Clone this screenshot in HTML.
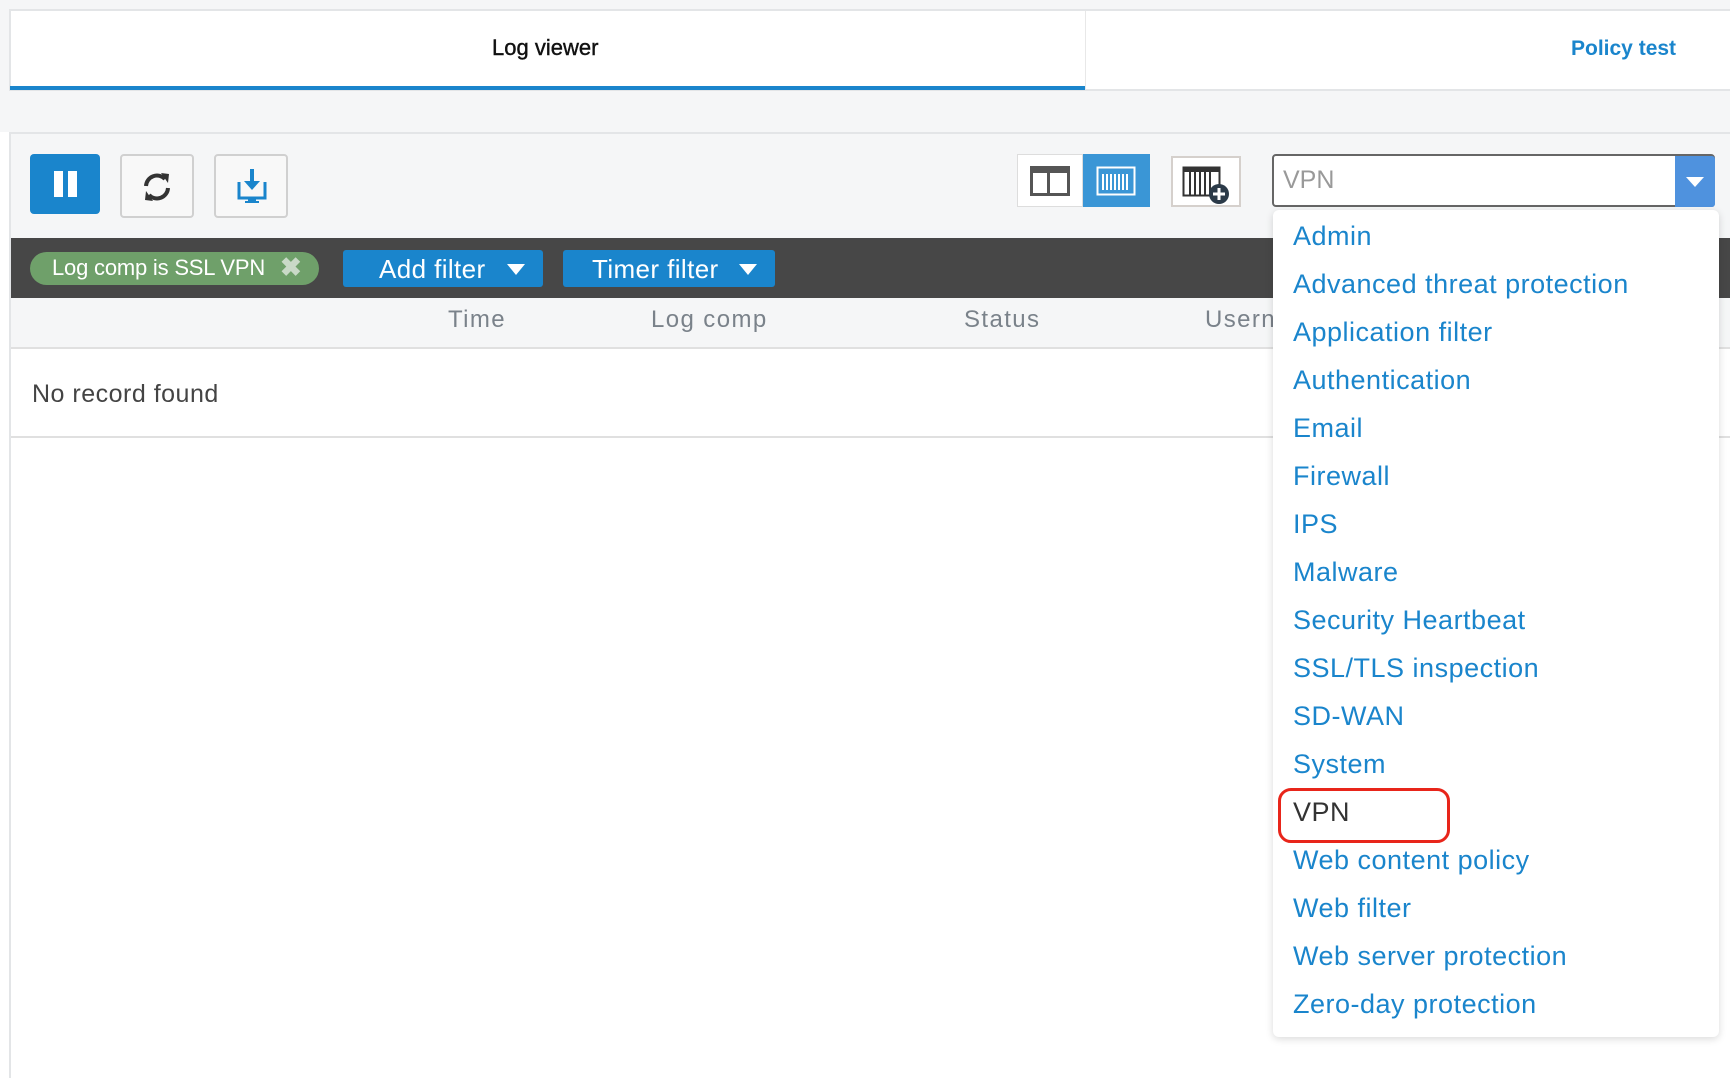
<!DOCTYPE html>
<html><head><meta charset="utf-8"><style>
*{margin:0;padding:0;box-sizing:border-box}
body{width:1730px;height:1078px;background:#fff;font-family:"Liberation Sans",sans-serif;position:relative;overflow:hidden}
.a{position:absolute}
.t{white-space:nowrap}
.dd div{position:absolute;left:20px;font-size:27px;color:#1a85cc;letter-spacing:0.5px;white-space:nowrap}
</style></head><body>
<div class="a" style="left:0;top:0;width:1730px;height:132px;background:#f5f6f7"></div>
<div class="a" style="left:9px;top:9px;width:1721px;height:82px;background:#fff;border-top:2px solid #e3e5e7;border-left:2px solid #e3e5e7;border-bottom:2px solid #e3e5e7"></div>
<div class="a" style="left:1085px;top:11px;width:1px;height:78px;background:#e8e8e8"></div>
<div class="a" style="left:10px;top:86px;width:1075px;height:4px;background:#1a85cc"></div>
<div class="a t" style="left:492px;top:35px;font-size:22px;color:#111;-webkit-text-stroke:0.4px #111">Log viewer</div>
<div class="a t" style="left:1571px;top:37px;font-size:21px;color:#1a85cc;font-weight:bold;letter-spacing:0px">Policy test</div>
<!-- panel -->
<div class="a" style="left:9px;top:132px;width:1721px;height:946px;border-left:2px solid #e3e5e7;border-top:2px solid #e3e5e7;background:#f5f6f7"></div>
<div class="a" style="left:11px;top:349px;width:1719px;height:729px;background:#fff"></div>
<div class="a" style="left:11px;top:436px;width:1719px;height:2px;background:#e0e0e0"></div>
<div class="a" style="left:11px;top:347px;width:1719px;height:2px;background:#e0e0e0"></div>
<!-- toolbar -->
<div class="a" style="left:30px;top:154px;width:70px;height:60px;background:#1a85cc;border-radius:4px"></div>
<div class="a" style="left:54px;top:171px;width:9px;height:26px;background:#fff"></div>
<div class="a" style="left:68px;top:171px;width:9px;height:26px;background:#fff"></div>
<div class="a" style="left:120px;top:154px;width:74px;height:64px;background:#f8f8f8;border:2px solid #d0d0d0;border-radius:4px"></div>
<svg class="a" style="left:139px;top:169px" width="36" height="36" viewBox="0 0 36 36"><path d="M7 17a11 11 0 0 1 19-7" fill="none" stroke="#333" stroke-width="4"/><path d="M22 4l8 1-1 9z" fill="#333"/><path d="M29 19a11 11 0 0 1-19 7" fill="none" stroke="#333" stroke-width="4"/><path d="M14 32l-8-1 1-9z" fill="#333"/></svg>
<div class="a" style="left:214px;top:154px;width:74px;height:64px;background:#f8f8f8;border:2px solid #d0d0d0;border-radius:4px"></div>
<svg class="a" style="left:236px;top:168px" width="32" height="38" viewBox="0 0 32 38"><path d="M3 14v16h26V14" fill="none" stroke="#1a85cc" stroke-width="3"/><rect x="14" y="1" width="4" height="14" fill="#1a85cc"/><path d="M8 13h16l-8 9z" fill="#1a85cc"/><rect x="12" y="30" width="8" height="3" fill="#1a85cc"/><rect x="9" y="33" width="14" height="2" fill="#1a85cc"/></svg>
<!-- view buttons -->
<div class="a" style="left:1017px;top:154px;width:66px;height:53px;background:#fff;border:1px solid #ddd"></div>
<svg class="a" style="left:1030px;top:166px" width="40" height="30"><rect x="1.5" y="1.5" width="37" height="27" fill="none" stroke="#555" stroke-width="3"/><rect x="1" y="1" width="38" height="6" fill="#555"/><rect x="17" y="6" width="3" height="22" fill="#555"/></svg>
<div class="a" style="left:1083px;top:154px;width:67px;height:53px;background:#3a96d6"></div>
<svg class="a" style="left:1096px;top:166px" width="40" height="30"><rect x="1.5" y="1.5" width="37" height="27" fill="none" stroke="#fff" stroke-width="2"/><g fill="#fff"><rect x="6" y="8" width="2" height="16"/><rect x="10" y="8" width="2" height="16"/><rect x="14" y="8" width="2" height="16"/><rect x="18" y="8" width="2" height="16"/><rect x="22" y="8" width="2" height="16"/><rect x="26" y="8" width="2" height="16"/><rect x="30" y="8" width="2" height="16"/></g></svg>
<div class="a" style="left:1171px;top:156px;width:70px;height:51px;background:#fff;border:2px solid #d5d0cc"></div>
<svg class="a" style="left:1182px;top:166px" width="50" height="40"><rect x="1" y="1" width="37" height="5" fill="#333"/><rect x="1.5" y="1.5" width="36" height="28" fill="none" stroke="#333" stroke-width="2"/><g fill="#333"><rect x="7" y="6" width="2" height="24"/><rect x="12" y="6" width="2" height="24"/><rect x="17" y="6" width="2" height="24"/><rect x="22" y="6" width="2" height="24"/><rect x="27" y="6" width="2" height="24"/></g><circle cx="37" cy="28" r="10" fill="#2b3a48"/><rect x="35.5" y="22" width="3" height="12" fill="#fff"/><rect x="31" y="26.5" width="12" height="3" fill="#fff"/></svg>
<!-- select -->
<div class="a" style="left:1272px;top:154px;width:443px;height:53px;background:#fff;border:2px solid #666;border-radius:4px"></div>
<div class="a" style="left:1675px;top:156px;width:40px;height:51px;background:#4f92de;border-radius:0 3px 3px 0"></div>
<div class="a" style="left:1686px;top:177px;width:0;height:0;border-left:9px solid transparent;border-right:9px solid transparent;border-top:10px solid #fff"></div>
<div class="a t" style="left:1283px;top:166px;font-size:25px;color:#999">VPN</div>
<!-- filter bar -->
<div class="a" style="left:11px;top:238px;width:1719px;height:60px;background:#474747"></div>
<div class="a" style="left:30px;top:252px;width:289px;height:33px;background:#6fa06a;border-radius:17px"></div>
<div class="a t" style="left:52px;top:255px;font-size:22px;color:#fff;letter-spacing:-0.2px">Log comp is SSL VPN</div>
<div class="a t" style="left:280px;top:252px;font-size:26px;color:#c9d9c7;font-weight:bold">✖</div>
<div class="a" style="left:343px;top:250px;width:200px;height:37px;background:#1a85cc;border-radius:3px"></div>
<div class="a t" style="left:379px;top:254px;font-size:26px;color:#fff;letter-spacing:0.4px">Add filter</div>
<div class="a" style="left:507px;top:264px;border-left:9px solid transparent;border-right:9px solid transparent;border-top:11px solid #fff"></div>
<div class="a" style="left:563px;top:250px;width:212px;height:37px;background:#1a85cc;border-radius:3px"></div>
<div class="a t" style="left:592px;top:254px;font-size:26px;color:#fff;letter-spacing:0.4px">Timer filter</div>
<div class="a" style="left:739px;top:264px;border-left:9px solid transparent;border-right:9px solid transparent;border-top:11px solid #fff"></div>
<!-- header -->
<div class="a t" style="left:448px;top:306px;font-size:24px;color:#7a828a;letter-spacing:1.4px">Time</div>
<div class="a t" style="left:651px;top:306px;font-size:24px;color:#7a828a;letter-spacing:1.4px">Log comp</div>
<div class="a t" style="left:964px;top:306px;font-size:24px;color:#7a828a;letter-spacing:1.4px">Status</div>
<div class="a t" style="left:1205px;top:306px;font-size:24px;color:#7a828a;letter-spacing:1.4px">Usern</div>
<div class="a t" style="left:32px;top:380px;font-size:25px;color:#444;letter-spacing:0.5px">No record found</div>
<!-- dropdown -->
<div class="a dd" style="left:1273px;top:210px;width:446px;height:827px;background:#fff;border-radius:6px;box-shadow:0 2px 8px rgba(0,0,0,0.15)">
<div style="top:11px">Admin</div>
<div style="top:59px">Advanced threat protection</div>
<div style="top:107px">Application filter</div>
<div style="top:155px">Authentication</div>
<div style="top:203px">Email</div>
<div style="top:251px">Firewall</div>
<div style="top:299px">IPS</div>
<div style="top:347px">Malware</div>
<div style="top:395px">Security Heartbeat</div>
<div style="top:443px">SSL/TLS inspection</div>
<div style="top:491px">SD-WAN</div>
<div style="top:539px">System</div>
<div style="top:587px;color:#333">VPN</div>
<div style="top:635px">Web content policy</div>
<div style="top:683px">Web filter</div>
<div style="top:731px">Web server protection</div>
<div style="top:779px">Zero-day protection</div>
</div>
<div class="a" style="left:1278px;top:788px;width:172px;height:55px;border:3px solid #e8251a;border-radius:13px"></div>
</body></html>
